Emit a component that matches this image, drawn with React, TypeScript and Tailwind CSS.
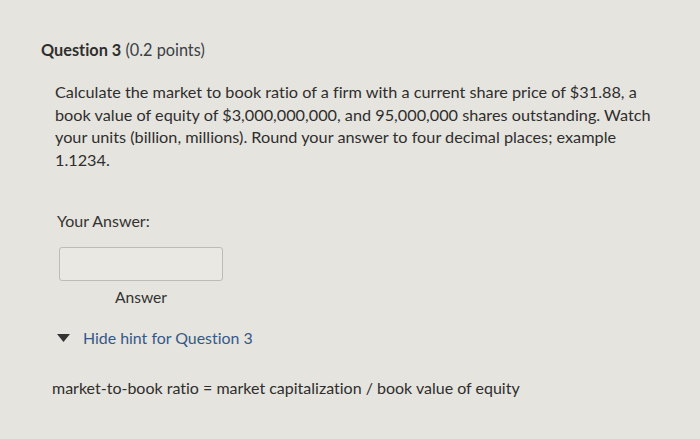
export default function App() {
  return (
    <div
      className="w-[700px] h-[439px] overflow-hidden bg-[#e6e4de] text-[#333333] [font-variant-ligatures:none]"
      style={{ fontFamily: 'Lato, "Open Sans", sans-serif' }}
    >
      <div className="pt-[40px] pl-[41px]">
        <h2 className="text-[16.3px] leading-[20px] text-[#2f2f2f]">
          <span className="font-bold">Question 3</span>{' '}
          <span className="text-[#3b3f46]">(0.2 points)</span>
        </h2>

        <p className="mt-[21px] ml-[14px] w-[610px] text-[16.25px] leading-[22.5px] text-[#2e2e2e]">
          Calculate the market to book ratio of a firm with a current share price of $31.88, a book
          value of equity of $3,000,000,000, and 95,000,000 shares outstanding. Watch your units
          (billion, millions). Round your answer to four decimal places; example 1.1234.
        </p>

        <div className="mt-[40px] ml-[16px] text-[16px] leading-[20px] text-[#333333]">Your Answer:</div>

        <div className="mt-[16px] ml-[18px] w-[164px] h-[34px] rounded-[3px] border border-[#bdbcb6] bg-[#e9e8e3]" />

        <div className="mt-[6px] ml-[74px] text-[15.6px] leading-[20px] text-[#333333]">Answer</div>

        <div className="mt-[21px] ml-[16px] flex items-center gap-[13px]">
          <svg width="13" height="8" viewBox="0 0 13 8">
            <path d="M0 0 H13 L6.5 8 Z" fill="#333333" />
          </svg>
          <span className="text-[15.9px] leading-[20px] text-[#35588a]">Hide hint for Question 3</span>
        </div>

        <div className="mt-[30px] ml-[11px] text-[16px] leading-[20px] text-[#2e2e2e]">
          market-to-book ratio = market capitalization / book value of equity
        </div>
      </div>
    </div>
  )
}
